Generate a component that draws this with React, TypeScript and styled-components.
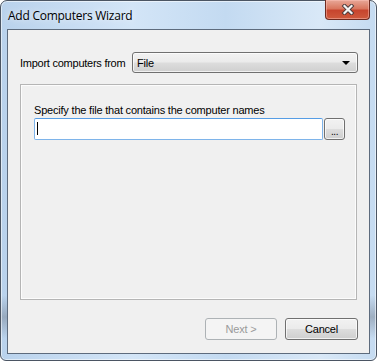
import React from "react";
import styled, { createGlobalStyle } from "styled-components";

const GlobalStyle = createGlobalStyle`
  html, body {
    margin: 0;
    padding: 0;
    background: #ffffff;
  }
`;

const Window = styled.div`
  box-sizing: border-box;
  width: 377px;
  height: 361px;
  display: flex;
  flex-direction: column;
  padding: 0 6px 6px 6px;
  border: 1px solid #4b5563;
  border-radius: 7px 7px 6px 6px;
  background:
    linear-gradient(180deg, rgba(255, 255, 255, 0) 0%, rgba(255, 255, 255, 0) 82%, rgba(110, 120, 135, 0.45) 88%, rgba(255, 255, 255, 0) 94%),
    linear-gradient(90deg, #b9d2ec 0%, #d3e5f7 35%, #c3daf1 60%, #d9e8f7 85%, #c5dbf1 100%);
  box-shadow: inset 0 0 0 1px rgba(255, 255, 255, 0.55);
  font-family: "Liberation Sans", Arial, sans-serif;
`;

const TitleBar = styled.div`
  height: 28px;
  display: flex;
  justify-content: space-between;
  align-items: flex-start;
  flex-shrink: 0;
`;

const Title = styled.div`
  padding: 6px 0 0 1px;
  font-family: "Open Sans", "Noto Sans", sans-serif;
  font-size: 12px;
  letter-spacing: -0.25px;
  color: #000000;
  text-shadow: 0 0 6px rgba(255, 255, 255, 0.9);
`;

const CloseButton = styled.div`
  box-sizing: border-box;
  width: 45px;
  height: 20px;
  margin: -1px 0 0 0;
  display: flex;
  align-items: center;
  justify-content: center;
  border: 1px solid #6e2a20;
  border-top: none;
  border-radius: 0 0 4px 4px;
  background: linear-gradient(180deg, #e8a898 0%, #d9775f 45%, #c7452e 55%, #cf5a3d 100%);
  box-shadow: inset 0 0 0 1px rgba(255, 200, 190, 0.45);
`;

const Client = styled.div`
  flex: 1;
  display: flex;
  flex-direction: column;
  padding: 22px 11px 13px 12px;
  background: #f0f0f0;
  border: 1px solid #5d6b7d;
  font-size: 11px;
  letter-spacing: -0.2px;
  color: #000000;
`;

const SourceRow = styled.div`
  display: flex;
  align-items: center;
  height: 21px;
`;

const Label = styled.span`
  width: 112px;
  white-space: nowrap;
  letter-spacing: -0.25px;
`;

const Combo = styled.div`
  box-sizing: border-box;
  flex: 1;
  height: 21px;
  display: flex;
  align-items: center;
  justify-content: space-between;
  padding: 0 7px 0 4px;
  border: 1px solid #707070;
  border-radius: 3px;
  background: linear-gradient(180deg, #f2f2f2 0%, #ebebeb 48%, #dddddd 52%, #cfcfcf 100%);
  box-shadow: inset 0 0 0 1px rgba(255, 255, 255, 0.7);
`;

const Arrow = styled.span`
  width: 0;
  height: 0;
  border-left: 4px solid transparent;
  border-right: 4px solid transparent;
  border-top: 4px solid #000000;
`;

const Group = styled.div`
  flex: 1;
  margin: 11px 1px 0 0;
  padding: 19px 11px 0 13px;
  border: 1px solid #b5b5b5;
  box-shadow: inset 0 0 0 1px #fcfcfc;
  display: flex;
  flex-direction: column;
`;

const GroupText = styled.div`
  height: 14px;
`;

const FileRow = styled.div`
  display: flex;
  align-items: stretch;
  height: 22px;
  gap: 1px;
`;

const TextBox = styled.div`
  box-sizing: border-box;
  flex: 1;
  background: #ffffff;
  border: 1px solid #7eb4ea;
  border-top-color: #569de5;
  border-radius: 2px;
  padding: 3px 0 0 2px;
`;

const Caret = styled.div`
  width: 1px;
  height: 13px;
  background: #000000;
`;

const Button = styled.div<{ $disabled?: boolean; $w: number }>`
  box-sizing: border-box;
  width: ${(p) => p.$w}px;
  height: 100%;
  display: flex;
  align-items: center;
  justify-content: center;
  border: 1px solid ${(p) => (p.$disabled ? "#adb2b5" : "#707070")};
  border-radius: 3px;
  color: ${(p) => (p.$disabled ? "#9a9a9a" : "#000000")};
  background: ${(p) =>
    p.$disabled
      ? "#f4f4f4"
      : "linear-gradient(180deg, #f2f2f2 0%, #ebebeb 48%, #dddddd 52%, #cfcfcf 100%)"};
  box-shadow: ${(p) => (p.$disabled ? "none" : "inset 0 0 0 1px rgba(255, 255, 255, 0.7)")};
`;

const Dots = styled.span`
  padding-top: 5px;
  font-size: 10px;
  letter-spacing: -0.5px;
`;

const Footer = styled.div`
  display: flex;
  justify-content: flex-end;
  gap: 8px;
  height: 22px;
  margin-top: 18px;
`;

export default function App() {
  return (
    <>
      <GlobalStyle />
      <Window>
        <TitleBar>
          <Title>Add Computers Wizard</Title>
          <CloseButton>
            <svg width="14" height="11" viewBox="0 0 14 11">
              <path
                d="M3.5 2 L10.5 9 M10.5 2 L3.5 9"
                stroke="#4a3a3a"
                strokeWidth="4"
                strokeLinecap="square"
              />
              <path
                d="M3.5 2 L10.5 9 M10.5 2 L3.5 9"
                stroke="#f4f4f4"
                strokeWidth="2.2"
                strokeLinecap="square"
              />
            </svg>
          </CloseButton>
        </TitleBar>
        <Client>
          <SourceRow>
            <Label>Import computers from</Label>
            <Combo>
              <span>File</span>
              <Arrow />
            </Combo>
          </SourceRow>
          <Group>
            <GroupText>Specify the file that contains the computer names</GroupText>
            <FileRow>
              <TextBox>
                <Caret />
              </TextBox>
              <Button $w={21}>
                <Dots>...</Dots>
              </Button>
            </FileRow>
          </Group>
          <Footer>
            <Button $w={72} $disabled>
              Next &gt;
            </Button>
            <Button $w={73}>Cancel</Button>
          </Footer>
        </Client>
      </Window>
    </>
  );
}
